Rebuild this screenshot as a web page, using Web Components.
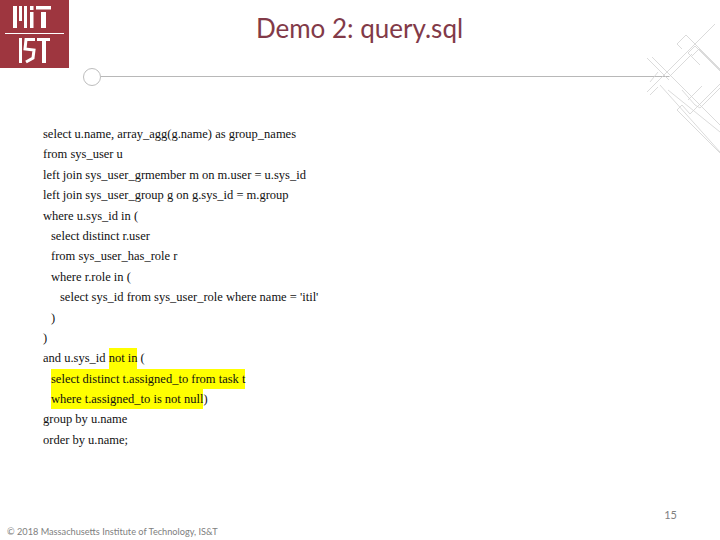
<!DOCTYPE html>
<html>
<head>
<meta charset="utf-8">
<title>Demo 2: query.sql</title>
<style>
  html, body { margin: 0; padding: 0; background: #fff; }
</style>
</head>
<body>
<slide-page>
  <slide-header slot="header" title-text="Demo 2: query.sql"></slide-header>
  <code-listing slot="main">
    <code-line>select u.name, array_agg(g.name) as group_names</code-line>
    <code-line>from sys_user u</code-line>
    <code-line>left join sys_user_grmember m on m.user = u.sys_id</code-line>
    <code-line>left join sys_user_group g on g.sys_id = m.group</code-line>
    <code-line>where u.sys_id in (</code-line>
    <code-line indent="1">select distinct r.user</code-line>
    <code-line indent="1">from sys_user_has_role r</code-line>
    <code-line indent="1">where r.role in (</code-line>
    <code-line indent="2">select sys_id from sys_user_role where name = 'itil'</code-line>
    <code-line indent="1">)</code-line>
    <code-line>)</code-line>
    <code-line>and u.sys_id <mark-text>not in</mark-text> (</code-line>
    <code-line indent="1"><mark-text>select distinct t.assigned_to from task t</mark-text></code-line>
    <code-line indent="1"><mark-text>where t.assigned_to is not null</mark-text>)</code-line>
    <code-line>group by u.name</code-line>
    <code-line>order by u.name;</code-line>
  </code-listing>
  <slide-footer slot="footer" page="15">© 2018 Massachusetts Institute of Technology, IS&amp;T</slide-footer>
</slide-page>

<script>
class SlidePage extends HTMLElement {
  constructor() {
    super();
    this.shadowDOM = this.attachShadow({ mode: "open" });
    this.shadowDOM.innerHTML = `
      <style>
        :host {
          display: flex;
          flex-direction: column;
          width: 720px;
          height: 540px;
          overflow: hidden;
          background: #fff;
        }
        .main { flex: 1; padding: 25px 0 0 43px; }
      </style>
      <slot name="header"></slot>
      <div class="main"><slot name="main"></slot></div>
      <slot name="footer"></slot>
    `;
  }
}

class SlideHeader extends HTMLElement {
  constructor() {
    super();
    this.shadowDOM = this.attachShadow({ mode: "open" });
  }

  connectedCallback() {
    this.shadowDOM.innerHTML = `
      <style>
        :host {
          display: block;
          position: relative;
          height: 99px;
          flex: none;
        }
        .top { display: flex; height: 68px; }
        .logo { width: 69px; height: 68px; flex: none; display: block; }
        h1 {
          flex: 1;
          margin: 12px 0 0;
          padding-right: 70px;
          text-align: center;
          font: 400 26px/32px Lato, "Open Sans", sans-serif;
          color: #823a48;
        }
        /* decoration over the header, bleeds off the right edge */
        .rule { position: absolute; left: 83px; top: 20px; width: 637px; height: 140px; }
      </style>
      <div class="top">
        <svg class="logo" viewBox="0 0 69 68">
          <rect width="69" height="68" fill="#9e363f"/>
          <g fill="#fff">
            <rect x="13" y="6" width="4" height="22"/>
            <rect x="19" y="6" width="3" height="15"/>
            <rect x="24" y="6" width="3" height="22"/>
            <rect x="30" y="12" width="3.500" height="16"/>
            <rect x="30" y="6" width="3.500" height="4"/>
            <rect x="36" y="6" width="15" height="3.500"/>
            <rect x="41" y="12" width="5" height="16"/>
            <rect x="5" y="33" width="59" height="1"/>
            <rect x="19" y="38" width="3" height="25"/>
            <rect x="37" y="38" width="13" height="3"/>
            <rect x="42" y="41" width="4" height="22"/>
          </g>
          <path d="M35 39.500H26L25 49 34 50 33 58 26 62" fill="none" stroke="#fff" stroke-width="3"/>
        </svg>
        <h1>${this.getAttribute("title-text")}</h1>
      </div>
      <svg class="rule" viewBox="83 20 637 140">
        <circle cx="92" cy="77" r="8.500" fill="#fff" stroke="#bdbdbd"/>
        <path d="M101 76.500H669" stroke="#b8b8b8" fill="none"/>
        <g fill="none" stroke="#d2d2d2" stroke-width=".8">
          <path d="M647 92L715 24"/>
          <path d="M669 77L692 54"/>
          <path d="M688 53L695 46L720 71M692 56L699 49L720 70M688 53L700 65"/>
          <path d="M677 44L682 49M677 44L686 35L720 69"/>
          <path d="M647 58L669 80M652 57L720 125"/>
          <path d="M650 95L658 87M650 82L658 72"/>
          <path d="M660 85L720 152"/>
          <path d="M677 110L720 153M677 110L682 105L690 114L720 84"/>
          <path d="M682 90L695 105L700 108L720 88M688 100L702 86"/>
          <path d="M668 90L720 132"/>
        </g>
      </svg>
    `;
  }
}

class CodeListing extends HTMLElement {
  constructor() {
    super();
    this.shadowDOM = this.attachShadow({ mode: "open" });
    this.shadowDOM.innerHTML = `
      <style>
        :host {
          display: flex;
          flex-direction: column;
          font: 12.5px/20.4px "Liberation Serif", serif;
          color: #111;
        }
      </style>
      <slot></slot>
    `;
  }
}

class CodeLine extends HTMLElement {
  constructor() {
    super();
    this.shadowDOM = this.attachShadow({ mode: "open" });
    this.shadowDOM.innerHTML = `
      <style>
        :host { display: block; white-space: nowrap; height: 20.4px; }
        :host([indent="1"]) { padding-left: 8px; }
        :host([indent="2"]) { padding-left: 17px; }
      </style>
      <slot></slot>
    `;
  }
}

class MarkText extends HTMLElement {
  constructor() {
    super();
    this.shadowDOM = this.attachShadow({ mode: "open" });
    this.shadowDOM.innerHTML = `
      <style>
        :host { display: inline-block; background: #ffff00; height: 20.4px; }
      </style>
      <slot></slot>
    `;
  }
}

class SlideFooter extends HTMLElement {
  constructor() {
    super();
    this.shadowDOM = this.attachShadow({ mode: "open" });
  }

  connectedCallback() {
    this.shadowDOM.innerHTML = `
      <style>
        :host {
          display: flex;
          flex-direction: column;
          flex: none;
          padding: 0 43px 2px 7px;
          font-family: Lato, "Open Sans", sans-serif;
          color: #808080;
        }
        .page { align-self: flex-end; font-size: 11px; line-height: 14px; margin-bottom: 4px; }
        .copy { font-size: 9.200px; line-height: 12px; }
      </style>
      <div class="page">${this.getAttribute("page")}</div>
      <div class="copy"><slot></slot></div>
    `;
  }
}

customElements.define("slide-page", SlidePage);
customElements.define("slide-header", SlideHeader);
customElements.define("code-listing", CodeListing);
customElements.define("code-line", CodeLine);
customElements.define("mark-text", MarkText);
customElements.define("slide-footer", SlideFooter);
</script>
</body>
</html>
